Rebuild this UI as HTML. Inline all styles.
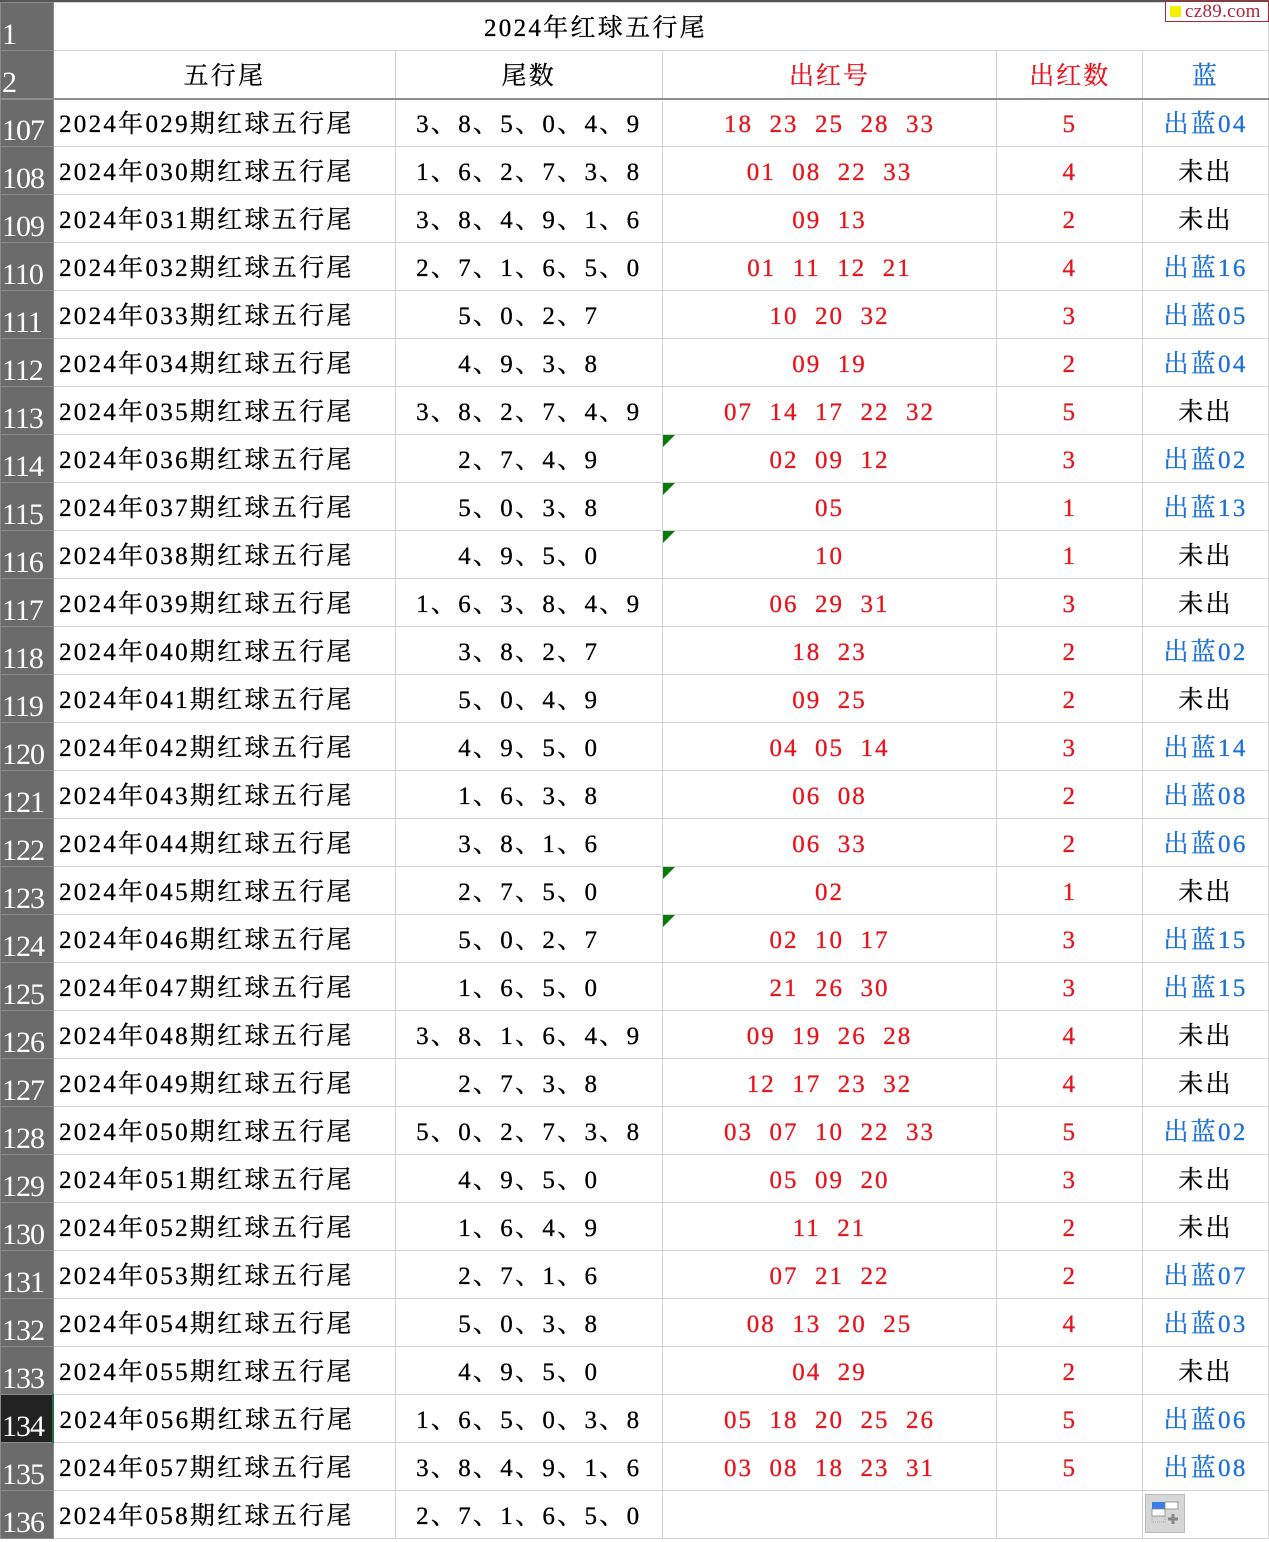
<!DOCTYPE html>
<html><head><meta charset="utf-8"><style>
*{margin:0;padding:0;box-sizing:border-box}
body{width:1269px;height:1542px;background:#fff;overflow:hidden;position:relative;font-family:"Liberation Serif","Noto Serif CJK SC",serif}
table{border-collapse:collapse;table-layout:fixed;position:absolute;left:0;top:2px}
td{border:1px solid #d4d4d4;height:48px;font-size:25px;line-height:30px;letter-spacing:2.3px;text-align:center;vertical-align:middle;white-space:pre;padding-top:5px;position:relative;-webkit-text-stroke:0.3px}
td.h{background:#6b6b6b;color:#fff;font-size:30px;text-align:left;vertical-align:bottom;padding:0 0 0 1px;letter-spacing:-1px;border-color:#8a8a8a;line-height:30px;-webkit-text-stroke:0}
td.a{text-align:left;padding-left:5px;color:#000}
.r{color:#e8141c;letter-spacing:2px}.b{color:#1b6fd8}
tr.hd td{border-bottom:2px solid #8e8e8e}
.tri{position:absolute;left:0;top:0;width:0;height:0;border-top:12px solid #0b7a0b;border-right:12px solid transparent}
.top{position:absolute;left:0;top:0;width:1269px;height:2px;background:#555}
.logo{position:absolute;left:1165px;top:1px;width:104px;height:21px;border:1px solid #b0243a;background:#fff;font-size:19px;color:#b0243a;line-height:19px;padding-left:19px;letter-spacing:0.3px}
.logo:before{content:"";position:absolute;left:4px;top:4px;width:11px;height:11px;background:#f5f000}
.btn{position:absolute;left:1145px;top:1494px;width:40px;height:39px;background:#d6d6d6;border:1px solid #bbb}
</style></head><body>
<div class="top"></div>
<table>
<colgroup><col style="width:53px"><col style="width:342px"><col style="width:267px"><col style="width:335px"><col style="width:146px"><col style="width:126px"></colgroup>
<tr><td class="h">1</td><td colspan="5" style="text-align:left;padding-left:430px">2024年红球五行尾</td></tr>
<tr class="hd"><td class="h">2</td><td>五行尾</td><td>尾数</td><td class="r">出红号</td><td class="r">出红数</td><td class="b">蓝</td></tr>
<tr><td class="h">107</td><td class="a">2024年029期红球五行尾</td><td>3、8、5、0、4、9</td><td class="r">18  23  25  28  33</td><td class="r">5</td><td class="b">出蓝04</td></tr>
<tr><td class="h">108</td><td class="a">2024年030期红球五行尾</td><td>1、6、2、7、3、8</td><td class="r">01  08  22  33</td><td class="r">4</td><td>未出</td></tr>
<tr><td class="h">109</td><td class="a">2024年031期红球五行尾</td><td>3、8、4、9、1、6</td><td class="r">09  13</td><td class="r">2</td><td>未出</td></tr>
<tr><td class="h">110</td><td class="a">2024年032期红球五行尾</td><td>2、7、1、6、5、0</td><td class="r">01  11  12  21</td><td class="r">4</td><td class="b">出蓝16</td></tr>
<tr><td class="h">111</td><td class="a">2024年033期红球五行尾</td><td>5、0、2、7</td><td class="r">10  20  32</td><td class="r">3</td><td class="b">出蓝05</td></tr>
<tr><td class="h">112</td><td class="a">2024年034期红球五行尾</td><td>4、9、3、8</td><td class="r">09  19</td><td class="r">2</td><td class="b">出蓝04</td></tr>
<tr><td class="h">113</td><td class="a">2024年035期红球五行尾</td><td>3、8、2、7、4、9</td><td class="r">07  14  17  22  32</td><td class="r">5</td><td>未出</td></tr>
<tr><td class="h">114</td><td class="a">2024年036期红球五行尾</td><td>2、7、4、9</td><td class="r"><span class="tri"></span>02  09  12</td><td class="r">3</td><td class="b">出蓝02</td></tr>
<tr><td class="h">115</td><td class="a">2024年037期红球五行尾</td><td>5、0、3、8</td><td class="r"><span class="tri"></span>05</td><td class="r">1</td><td class="b">出蓝13</td></tr>
<tr><td class="h">116</td><td class="a">2024年038期红球五行尾</td><td>4、9、5、0</td><td class="r"><span class="tri"></span>10</td><td class="r">1</td><td>未出</td></tr>
<tr><td class="h">117</td><td class="a">2024年039期红球五行尾</td><td>1、6、3、8、4、9</td><td class="r">06  29  31</td><td class="r">3</td><td>未出</td></tr>
<tr><td class="h">118</td><td class="a">2024年040期红球五行尾</td><td>3、8、2、7</td><td class="r">18  23</td><td class="r">2</td><td class="b">出蓝02</td></tr>
<tr><td class="h">119</td><td class="a">2024年041期红球五行尾</td><td>5、0、4、9</td><td class="r">09  25</td><td class="r">2</td><td>未出</td></tr>
<tr><td class="h">120</td><td class="a">2024年042期红球五行尾</td><td>4、9、5、0</td><td class="r">04  05  14</td><td class="r">3</td><td class="b">出蓝14</td></tr>
<tr><td class="h">121</td><td class="a">2024年043期红球五行尾</td><td>1、6、3、8</td><td class="r">06  08</td><td class="r">2</td><td class="b">出蓝08</td></tr>
<tr><td class="h">122</td><td class="a">2024年044期红球五行尾</td><td>3、8、1、6</td><td class="r">06  33</td><td class="r">2</td><td class="b">出蓝06</td></tr>
<tr><td class="h">123</td><td class="a">2024年045期红球五行尾</td><td>2、7、5、0</td><td class="r"><span class="tri"></span>02</td><td class="r">1</td><td>未出</td></tr>
<tr><td class="h">124</td><td class="a">2024年046期红球五行尾</td><td>5、0、2、7</td><td class="r"><span class="tri"></span>02  10  17</td><td class="r">3</td><td class="b">出蓝15</td></tr>
<tr><td class="h">125</td><td class="a">2024年047期红球五行尾</td><td>1、6、5、0</td><td class="r">21  26  30</td><td class="r">3</td><td class="b">出蓝15</td></tr>
<tr><td class="h">126</td><td class="a">2024年048期红球五行尾</td><td>3、8、1、6、4、9</td><td class="r">09  19  26  28</td><td class="r">4</td><td>未出</td></tr>
<tr><td class="h">127</td><td class="a">2024年049期红球五行尾</td><td>2、7、3、8</td><td class="r">12  17  23  32</td><td class="r">4</td><td>未出</td></tr>
<tr><td class="h">128</td><td class="a">2024年050期红球五行尾</td><td>5、0、2、7、3、8</td><td class="r">03  07  10  22  33</td><td class="r">5</td><td class="b">出蓝02</td></tr>
<tr><td class="h">129</td><td class="a">2024年051期红球五行尾</td><td>4、9、5、0</td><td class="r">05  09  20</td><td class="r">3</td><td>未出</td></tr>
<tr><td class="h">130</td><td class="a">2024年052期红球五行尾</td><td>1、6、4、9</td><td class="r">11  21</td><td class="r">2</td><td>未出</td></tr>
<tr><td class="h">131</td><td class="a">2024年053期红球五行尾</td><td>2、7、1、6</td><td class="r">07  21  22</td><td class="r">2</td><td class="b">出蓝07</td></tr>
<tr><td class="h">132</td><td class="a">2024年054期红球五行尾</td><td>5、0、3、8</td><td class="r">08  13  20  25</td><td class="r">4</td><td class="b">出蓝03</td></tr>
<tr><td class="h">133</td><td class="a">2024年055期红球五行尾</td><td>4、9、5、0</td><td class="r">04  29</td><td class="r">2</td><td>未出</td></tr>
<tr><td class="h" style="background:#222;border-right:2px solid #217346">134</td><td class="a">2024年056期红球五行尾</td><td>1、6、5、0、3、8</td><td class="r">05  18  20  25  26</td><td class="r">5</td><td class="b">出蓝06</td></tr>
<tr><td class="h">135</td><td class="a">2024年057期红球五行尾</td><td>3、8、4、9、1、6</td><td class="r">03  08  18  23  31</td><td class="r">5</td><td class="b">出蓝08</td></tr>
<tr><td class="h">136</td><td class="a">2024年058期红球五行尾</td><td>2、7、1、6、5、0</td><td class="r"></td><td class="r"></td><td></td></tr>
</table>
<div class="logo">cz89.com</div>
<div class="btn"><svg width="40" height="39" viewBox="0 0 40 39"><rect x="6" y="7" width="13" height="7" fill="#3b7de8"/><rect x="19" y="7" width="13" height="7" fill="#fff" stroke="#888" stroke-width="0.8"/><rect x="6" y="14" width="13" height="7" fill="#fff" stroke="#888" stroke-width="0.8"/><rect x="6" y="21" width="13" height="6" fill="none" stroke="#999" stroke-width="0.8" stroke-dasharray="1 1"/><path d="M27 19v10M22 24h10" stroke="#888" stroke-width="3"/></svg></div>
</body></html>
